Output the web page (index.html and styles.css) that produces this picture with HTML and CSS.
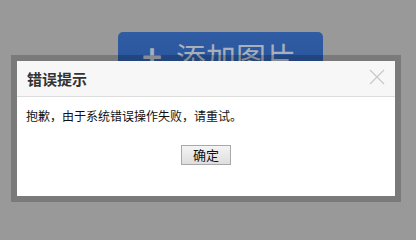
FILE: index.html
```html
<!DOCTYPE html>
<html>
<head>
<meta charset="utf-8">
<link rel="stylesheet" href="styles.css">
</head>
<body>
<div class="page">
  <div class="add-btn"><span class="plus">+</span><span class="add-text">添加图片</span></div>
</div>
<div class="dialog">
  <div class="dialog-inner">
    <div class="dialog-head">
      <span class="dialog-title">错误提示</span>
      <svg class="close" width="16" height="16" viewBox="0 0 16 16"><path d="M1 1 L15 15 M15 1 L1 15" stroke="#c8c8c8" stroke-width="1.2" fill="none"/></svg>
    </div>
    <div class="dialog-body">
      <p class="msg">抱歉，由于系统错误操作失败，请重试。</p>
      <div class="actions"><button class="ok">确定</button></div>
    </div>
  </div>
</div>
</body>
</html>
```
FILE: styles.css
```css
html, body {
  margin: 0;
  padding: 0;
  width: 416px;
  height: 211px;
  overflow: hidden;
  background: #999999;
  font-family: "Noto Sans CJK SC", "Liberation Sans", sans-serif;
}
.page {
  padding: 32px 0 0 118px;
}
.add-btn {
  width: 205px;
  height: 48px;
  border-radius: 5px;
  background: linear-gradient(#2f5ca3, #27539a);
  display: flex;
  align-items: flex-start;
  color: #a9b0bb;
  box-sizing: border-box;
  padding: 4px 0 0 24px;
  gap: 14px;
}
.plus {
  font-size: 34px;
  line-height: 40px;
  font-weight: bold;
}
.add-text {
  font-size: 30px;
  line-height: 40px;
  letter-spacing: 0px;
}
.dialog {
  position: absolute;
  left: 11px;
  top: 55px;
  width: 390px;
  height: 147px;
  box-sizing: border-box;
  border: 6px solid rgba(0, 0, 0, 0.2);
}
.dialog-inner {
  background: #fff;
  height: 100%;
  display: flex;
  flex-direction: column;
}
.dialog-head {
  height: 36px;
  box-sizing: border-box;
  background: #f7f7f7;
  border-bottom: 1px solid #dcdcdc;
  display: flex;
  align-items: center;
  justify-content: space-between;
  padding: 0 10px 0 10px;
}
.dialog-title {
  font-size: 15px;
  font-weight: bold;
  color: #333;
  letter-spacing: 0px;
}
.close {
  display: block;
  margin-top: -3px;
}
.dialog-body {
  padding: 0 9px;
}
.msg {
  margin: 10px 0 0 0;
  font-size: 12px;
  line-height: 18px;
  color: #111;
}
.actions {
  display: flex;
  justify-content: center;
  margin-top: 20px;
}
.ok {
  width: 50px;
  height: 20px;
  padding: 0;
  border: 1px solid #a8a8a8;
  background: linear-gradient(#f4f4f4, #dedede);
  font-family: "Noto Sans CJK SC", sans-serif;
  font-size: 13px;
  line-height: 18px;
  color: #111;
}
```
